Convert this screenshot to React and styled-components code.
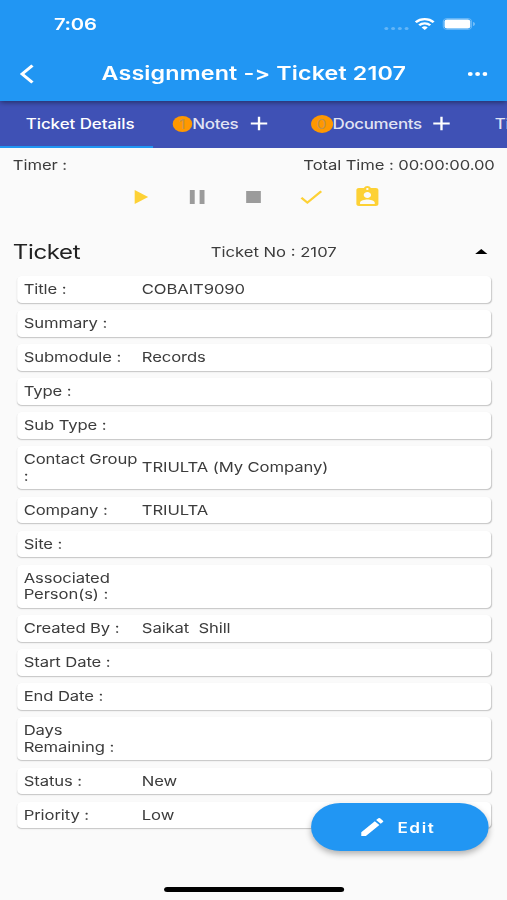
import React, { useState } from 'react';
import styled, { createGlobalStyle, ThemeProvider } from 'styled-components';
import {
    MdPlayArrow,
    MdPause,
    MdStop,
    MdCheck,
    MdAssignmentInd,
    MdArrowDropUp,
    MdEdit,
    MdAdd,
} from 'react-icons/md';

const theme = {
    colors: {
        primary: '#2196f3',
        tabs: '#3f51b5',
        badge: '#ff9800',
        accent: '#fdd135',
        disabled: '#9b9b9b',
        background: '#fafafa',
        card: '#ffffff',
        text: '#3c3c3c',
        heading: '#222222',
    },
};

const GlobalStyle = createGlobalStyle`
    * {
        box-sizing: border-box;
    }

    body {
        margin: 0;
        font-family: Inter, "Liberation Sans", sans-serif;
        background-color: ${props => props.theme.colors.background};
    }
`;

const Viewport = styled.div`
    width: 507px;
    height: 900px;
    overflow: hidden;
`;

// Laid out at phone width, then widened to fill the window
const Screen = styled.div`
    position: relative;
    display: flex;
    flex-direction: column;
    width: 414px;
    height: 900px;
    transform: scaleX(1.22464);
    transform-origin: 0 0;
    color: ${props => props.theme.colors.text};
    font-size: 13.6px;
    line-height: 16.5px;
    letter-spacing: -0.08px;
`;

const Header = styled.header`
    position: relative;
    z-index: 1;
    height: 101px;
    color: #fff;
    background-color: ${props => props.theme.colors.primary};
    box-shadow: 0 1px 5px rgba(0, 0, 0, 0.5);
`;

const StatusBar = styled.div`
    display: flex;
    justify-content: space-between;
    align-items: center;
    height: 48px;
    padding: 0 26px 0 44px;
`;

const Clock = styled.span`
    padding-top: 1px;
    font-size: 16.5px;
    font-weight: 600;
    letter-spacing: -0.2px;
`;

const StatusIcons = styled.svg`
    display: block;
    width: 76px;
    height: 16px;
`;

const AppBar = styled.div`
    display: flex;
    justify-content: space-between;
    align-items: center;
    height: 52px;
    padding: 0 15.5px 0 16px;
`;

const BarIcon = styled.svg`
    display: block;
    width: ${props => props.$width}px;
    height: 20px;
`;

const Title = styled.h1`
    margin: 0;
    font-size: 19px;
    line-height: 24px;
    font-weight: 600;
    letter-spacing: 0.12px;
    white-space: pre;
`;

const TabBar = styled.nav`
    display: flex;
    height: 46.5px;
    overflow: hidden;
    background-color: ${props => props.theme.colors.tabs};
`;

const Tab = styled.div`
    display: flex;
    flex: none;
    align-items: center;
    width: ${props => props.$width}px;
    padding: 1px 0 0 ${props => props.$indent}px;
    color: ${props => (props.$active ? '#fff' : 'rgba(255, 255, 255, 0.85)')};
    border-bottom: 2.5px solid ${props => (props.$active ? props.theme.colors.primary : 'transparent')};
    font-size: 13.8px;
    font-weight: 500;
    letter-spacing: ${props => (props.$active ? '-0.04px' : '-0.25px')};
    white-space: nowrap;

    svg {
        margin-left: 5px;
        color: #fff;
    }
`;

const Badge = styled.span`
    display: flex;
    justify-content: center;
    align-items: center;
    width: ${props => props.$size}px;
    height: ${props => props.$size}px;
    border-radius: 50%;
    color: #c2924c;
    background-color: ${props => props.theme.colors.badge};
    font-size: 13px;
    font-weight: 400;
`;

const TimerRow = styled.div`
    display: flex;
    justify-content: space-between;
    padding: 9px 10px 0 10.5px;
`;

const TimerControls = styled.div`
    display: flex;
    justify-content: center;
    gap: 22.5px;
    margin-top: 12px;
    padding-left: 0.5px;
`;

const ControlIcon = styled.span`
    display: flex;
    color: ${props => (props.$enabled ? props.theme.colors.accent : props.theme.colors.disabled)};
`;

const SectionHeader = styled.div`
    display: grid;
    grid-template-columns: 161.5px 1fr 24px;
    align-items: center;
    height: 48px;
    margin-top: 18px;
    padding: 1px 9px 0 10.5px;
`;

const SectionTitle = styled.h2`
    margin: 0;
    padding-top: 1px;
    color: ${props => props.theme.colors.heading};
    font-size: 19.6px;
    font-weight: 400;
    letter-spacing: -0.3px;
`;

const SectionNumber = styled.span`
    padding-top: 1px;
    letter-spacing: 0;
`;

const Toggle = styled.span`
    display: flex;
    color: #000;
    cursor: pointer;
`;

const FieldList = styled.div`
    display: flex;
    flex-direction: column;
    gap: 7.5px;
    margin: 1px 13.5px 0 14.3px;
`;

const FieldCard = styled.div`
    display: flex;
    align-items: center;
    padding: 5px;
    border-radius: 4px;
    background-color: ${props => props.theme.colors.card};
    box-shadow: 0 1px 1px rgba(0, 0, 0, 0.18), 0 1px 2px rgba(0, 0, 0, 0.06);
`;

const FieldLabel = styled.span`
    width: 96.5px;
    flex: none;
    white-space: pre;
`;

const FieldValue = styled.span`
    white-space: pre;
`;

const EditButton = styled.button`
    position: absolute;
    right: 15.5px;
    bottom: 49px;
    display: flex;
    align-items: center;
    width: 145px;
    height: 48px;
    padding: 0 0 0 38.5px;
    border: 0;
    border-radius: 24px;
    color: #fff;
    background-color: ${props => props.theme.colors.primary};
    box-shadow: 0 3px 6px rgba(0, 0, 0, 0.3);
    font-family: inherit;
    font-size: 14px;
    font-weight: 600;
    letter-spacing: 1.3px;
`;

const EditText = styled.span`
    margin-left: 8.5px;
`;

const HomeIndicator = styled.div`
    position: absolute;
    left: 133.5px;
    bottom: 8px;
    width: 147.5px;
    height: 5px;
    border-radius: 3px;
    background-color: #000;
`;

const controls = [
    { name: 'play', Icon: MdPlayArrow, enabled: true },
    { name: 'pause', Icon: MdPause, enabled: false },
    { name: 'stop', Icon: MdStop, enabled: false },
    { name: 'finish', Icon: MdCheck, enabled: true },
    { name: 'assign', Icon: MdAssignmentInd, enabled: true },
];

const fields = [
    { label: 'Title :', value: 'COBAIT9090' },
    { label: 'Summary :' },
    { label: 'Submodule :', value: 'Records' },
    { label: 'Type :' },
    { label: 'Sub Type :' },
    { label: 'Contact Group\n:', value: 'TRIULTA (My Company)' },
    { label: 'Company :', value: 'TRIULTA' },
    { label: 'Site :' },
    { label: 'Associated\nPerson(s) :' },
    { label: 'Created By :', value: 'Saikat  Shill' },
    { label: 'Start Date :' },
    { label: 'End Date :' },
    { label: 'Days\nRemaining :' },
    { label: 'Status :', value: 'New' },
    { label: 'Priority :', value: 'Low' },
];

const PhoneStatus = () => (
    <StatusIcons viewBox="0 0 76 16" fill="none">
        <g fill="#fff" opacity="0.3">
            <circle cx="3.500" cy="12.500" r="1.600" />
            <circle cx="9" cy="12.500" r="1.600" />
            <circle cx="14.500" cy="12.500" r="1.600" />
            <circle cx="20" cy="12.500" r="1.600" />
        </g>
        <g stroke="#fff" strokeWidth="2.200">
            <path d="M27.500 6.200a10.200 10.200 0 0 1 14.600 0" />
            <path d="M30.300 9.300a6.400 6.400 0 0 1 9 0" />
        </g>
        <path d="M34.800 14l-2.500-2.600a3.600 3.600 0 0 1 5 0z" fill="#fff" />
        <rect x="50" y="2.500" width="23" height="11" rx="3.300" stroke="#fff" opacity="0.3" />
        <rect x="51" y="3.500" width="21" height="9" rx="2" fill="#fff" />
        <path d="M74.300 6v4c.9-.3 1.500-1.100 1.500-2s-.6-1.700-1.500-2z" fill="#fff" opacity="0.4" />
    </StatusIcons>
);

const App = () => {
    const [expanded, setExpanded] = useState(true);

    return (
        <ThemeProvider theme={theme}>
            <GlobalStyle />
            <Viewport>
                <Screen>
                    <Header>
                        <StatusBar>
                            <Clock>7:06</Clock>
                            <PhoneStatus />
                        </StatusBar>
                        <AppBar>
                            <BarIcon $width={16} viewBox="0 0 16 20" fill="none">
                                <path d="M10.500 1.500L2 10l8.500 8.500" stroke="#fff" strokeWidth="2.600" />
                            </BarIcon>
                            <Title>{'Assignment -> Ticket 2107'}</Title>
                            <BarIcon $width={16} viewBox="0 0 16 20" fill="#fff">
                                <circle cx="2" cy="10" r="2" />
                                <circle cx="8" cy="10" r="2" />
                                <circle cx="14" cy="10" r="2" />
                            </BarIcon>
                        </AppBar>
                    </Header>

                    <TabBar>
                        <Tab $active $width={125} $indent={21}>
                            <span>Ticket Details</span>
                        </Tab>
                        <Tab $width={113} $indent={15.5}>
                            <Badge $size={16.5}>1</Badge>
                            <span>Notes</span>
                            <MdAdd size={23} />
                        </Tab>
                        <Tab $width={151} $indent={15.5}>
                            <Badge $size={18}>0</Badge>
                            <span>Documents</span>
                            <MdAdd size={23} />
                        </Tab>
                        <Tab $width={100} $indent={15}>
                            <span>Ti</span>
                        </Tab>
                    </TabBar>

                    <TimerRow>
                        <span>Timer :</span>
                        <span>Total Time : 00:00:00.00</span>
                    </TimerRow>
                    <TimerControls>
                        {controls.map(({ name, Icon, enabled }) => (
                            <ControlIcon key={name} $enabled={enabled}>
                                <Icon size={24} />
                            </ControlIcon>
                        ))}
                    </TimerControls>

                    <SectionHeader>
                        <SectionTitle>Ticket</SectionTitle>
                        <SectionNumber>Ticket No : 2107</SectionNumber>
                        <Toggle onClick={() => setExpanded(!expanded)}>
                            <MdArrowDropUp size={24} />
                        </Toggle>
                    </SectionHeader>

                    {expanded && (
                        <FieldList>
                            {fields.map(field => (
                                <FieldCard key={field.label}>
                                    <FieldLabel>{field.label}</FieldLabel>
                                    <FieldValue>{field.value}</FieldValue>
                                </FieldCard>
                            ))}
                        </FieldList>
                    )}

                    <EditButton>
                        <MdEdit size={24} />
                        <EditText>Edit</EditText>
                    </EditButton>
                    <HomeIndicator />
                </Screen>
            </Viewport>
        </ThemeProvider>
    );
};

export default App;
